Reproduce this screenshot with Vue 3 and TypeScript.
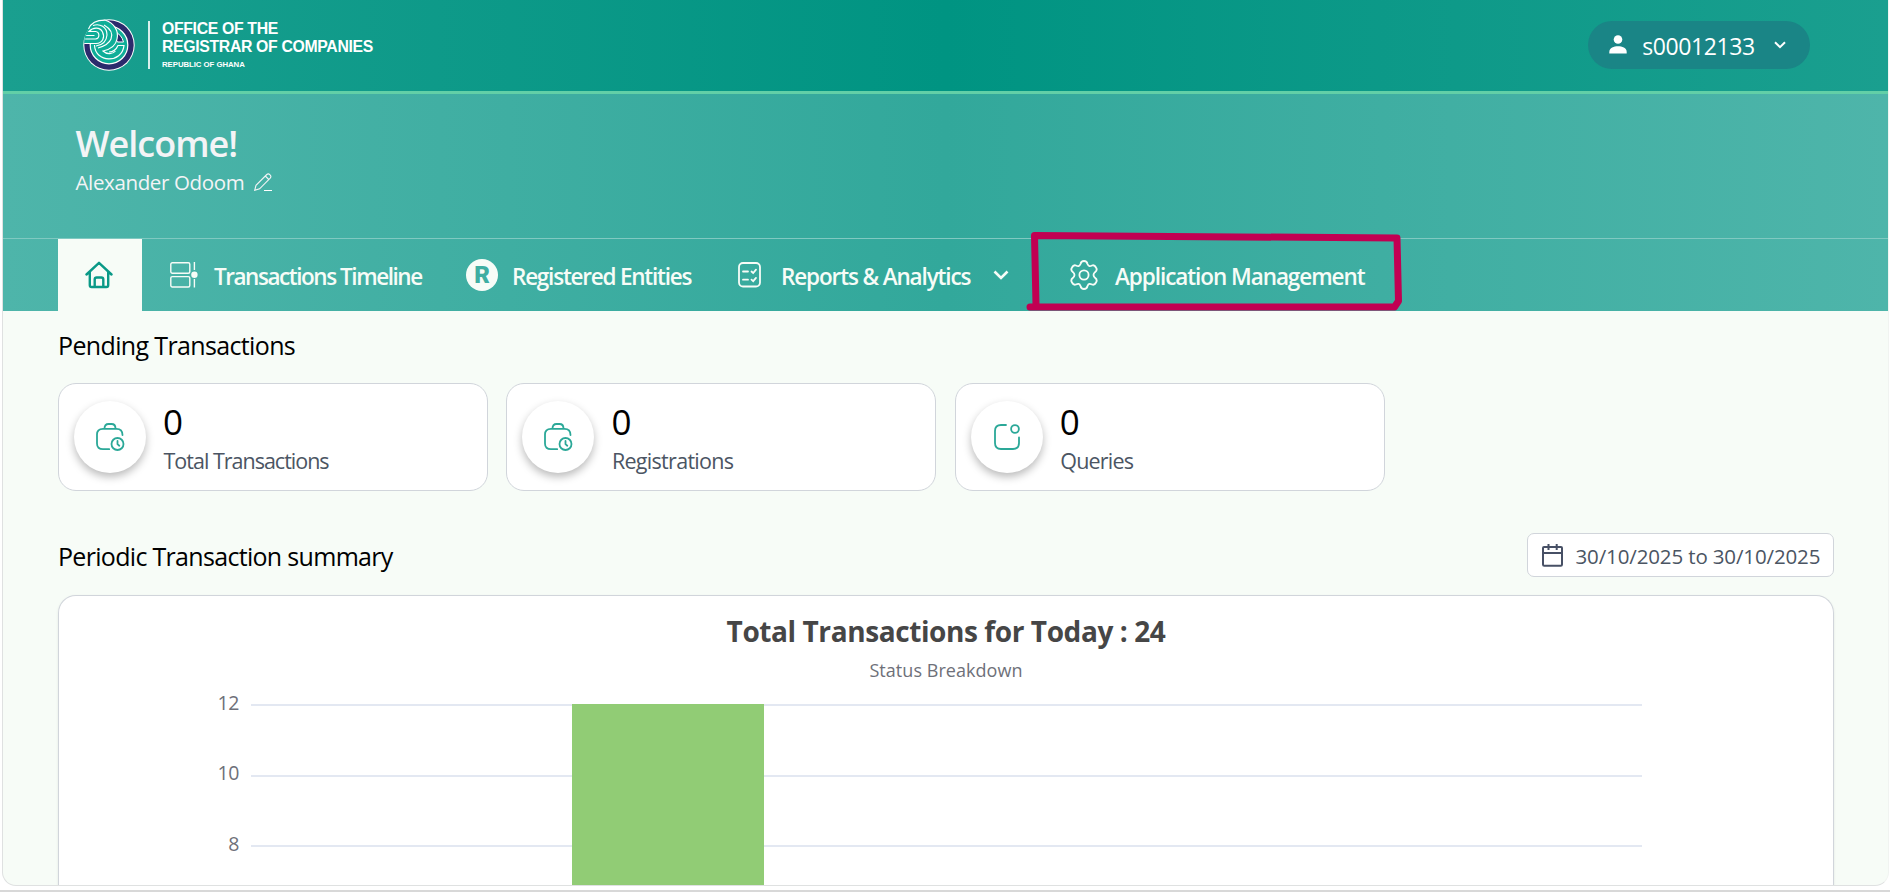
<script setup lang="ts">
interface Stat {
  label: string
  value: number
  icon: 'bag' | 'notice'
  fit: string
}

const stats: Stat[] = [
  { label: 'Total Transactions', value: 0, icon: 'bag', fit: 'fit-total' },
  { label: 'Registrations', value: 0, icon: 'bag', fit: 'fit-reg' },
  { label: 'Queries', value: 0, icon: 'notice', fit: 'fit-query' },
]

const axisTicks: number[] = [12, 10, 8]
</script>

<template>
  <div class="page">
    <div class="window">
      <header class="topbar">
        <div class="brand">
          <svg class="emblem" viewBox="0 0 52 52">
            <circle cx="26" cy="26" r="25.700" fill="#fff" />
            <circle cx="26" cy="26" r="24.700" fill="#2b2a6c" />
            <circle cx="26" cy="26" r="18.800" fill="#0fae98" stroke="#fff" stroke-width="1.200" />
            <path d="M31 12.500Q38.500 15 40.500 23H34.500Q33 20 31 17.500z" fill="#2b2a6c" stroke="#fff" />
            <path d="M11.500 26C12 44 39 45 41 26.500H35C33 31 30 33 26 33" fill="none" stroke="#fff" stroke-width="1.200" />
            <path d="M1.300 24.500C1 19 2.500 14 5.500 10C8 4 14 1 22.500 1.200C31 4 36 12 34 20C33 26 29 30 24 33.500Q20 31 20 28Q14 29 11 24.500z" fill="#0fae98" />
            <path d="M1.300 24.500H13C20 24 22 18 19.500 13C17 8 10 8 6 12.500H12.500C17 13 17 19.500 12.500 20H2.200M3.200 16.500H11.500M5.500 10C8 4 14 1 22.500 1.200C31 4 36 12 34 20C33 26 29 30 20 32C24 36 30 35 32.500 32M10 6.500C17 4 24 8 24 16C23.500 22 20 26 13 27M21 6C28 10 30 15 28 20C26 25 22 27 15 29" fill="none" stroke="#fff" stroke-width="1.150" />
          </svg>
          <span class="brand-rule"></span>
          <div class="brand-text">
            <span class="brand-a">OFFICE OF THE</span>
            <span class="brand-b">REGISTRAR OF COMPANIES</span>
            <span class="brand-c">REPUBLIC OF GHANA</span>
          </div>
        </div>
        <button class="user">
          <svg class="user-icon" viewBox="0 0 18 19">
            <circle cx="9" cy="4.500" r="4.300" fill="#fff" />
            <path d="M0.300 18.500V17C0.300 12.800 5 11.300 9 11.300S17.700 12.800 17.700 17V18.500z" fill="#fff" />
          </svg>
          <span class="user-name">s00012133</span>
          <svg class="user-chevron" viewBox="0 0 12 8"><path d="M1 1.200L6 6.200L11 1.200" fill="none" stroke="#fff" stroke-width="2" /></svg>
        </button>
      </header>

      <section class="hero">
        <div class="greeting">
          <h1>Welcome!</h1>
          <p class="person">
            <span class="person-name">Alexander Odoom</span>
            <svg class="pencil" viewBox="0 0 18 18">
              <path d="M0.700 17.300L2 12.300L12.800 1.500C14.800 -0.300 18.200 2.900 16.200 5.100L5.600 15.800ZM11.300 3L14.800 6.500" fill="none" stroke="#f3f4f6" stroke-width="1.100" />
              <path d="M10 17.500H18" stroke="#fff" />
            </svg>
          </p>
        </div>
        <nav class="tabs">
          <a class="tab tab-home">
            <svg class="i-home" viewBox="0 0 28 28"><path d="M1.500 13.500L14 1.800L26.500 13.500M4.800 11V24.200Q4.800 26 6.600 26H21.400Q23.200 26 23.200 24.200V11M9.700 26V18.500Q9.700 16.500 11.700 16.500H16.300Q18.300 16.500 18.300 18.500V26" fill="none" stroke="#0a9987" stroke-width="2.400" stroke-linecap="round" stroke-linejoin="round" /></svg>
          </a>
          <a class="tab tab-timeline">
            <svg class="i-timeline" viewBox="0 0 28 26">
              <g fill="none" stroke="#f7fcf7" stroke-width="1.400">
                <rect x="0.800" y="0.800" width="19" height="10.400" rx="1.500" />
                <rect x="0.800" y="14.600" width="19" height="10.400" rx="1.500" />
                <path d="M24.400 0V8M24.400 17V25.500" />
              </g>
              <circle cx="24.400" cy="12.700" r="3.200" fill="#f7fcf7" />
            </svg>
            <span class="tab-label">Transactions Timeline</span>
          </a>
          <a class="tab tab-entities">
            <span class="i-reg">R</span>
            <span class="tab-label">Registered Entities</span>
          </a>
          <a class="tab tab-reports">
            <svg class="i-reports" viewBox="0 0 24 26">
              <g fill="none" stroke="#f7fcf7" stroke-width="1.800" stroke-linecap="round">
                <rect x="1" y="1" width="21" height="23.500" rx="4" />
                <path d="M5 9.500H10M5 17.700H10M13.500 9.500L15.200 11L18 7.700M13.500 17.700L15.200 19.200L18 15.900" />
              </g>
            </svg>
            <span class="tab-label">Reports &amp; Analytics</span>
            <svg class="i-chevron" viewBox="0 0 16 12"><path d="M1.500 2.500L8 9L14.500 2.500" fill="none" stroke="#f7fcf7" stroke-width="2.600" /></svg>
          </a>
          <a class="tab tab-app">
            <svg class="i-gear" viewBox="0 0 28 30">
              <g fill="none" stroke="#f7fcf7" stroke-width="1.800" stroke-linejoin="round">
                <path d="M10.500 4C11 1.500 12 1 14 1S17 1.500 17.500 4C18.500 6.500 20 6.500 22 5.500C24 4.800 25 5.500 26 7.500C27.500 9.800 27 10.800 25 12.200C23 14 23 16 25 17.800C27 19.200 27.500 20.200 26 22.500C25 24.500 24 25.200 22 24.500C20 23.500 18.500 23.500 17.500 26C17 28.500 16 29 14 29S11 28.500 10.500 26C9.500 23.500 8 23.500 6 24.500C4 25.200 3 24.500 2 22.500C0.500 20.200 1 19.200 3 17.800C5 16 5 14 3 12.200C1 10.800 0.500 9.800 2 7.500C3 5.500 4 4.800 6 5.500C8 6.500 9.500 6.500 10.500 4Z" />
                <circle cx="14" cy="15" r="4.600" />
              </g>
            </svg>
            <span class="tab-label">Application Management</span>
            <svg class="marker" viewBox="0 0 376 80">
              <path d="M10 74L8.500 4.500L371 7L372.500 70L368.500 76L4 76" fill="none" stroke="#c10052" stroke-width="7" stroke-linecap="round" stroke-linejoin="round" />
            </svg>
          </a>
        </nav>
      </section>

      <main class="content">
        <h2 class="pending">Pending Transactions</h2>
        <div class="stats">
          <article v-for="stat in stats" :key="stat.label" class="stat">
            <span class="stat-badge">
              <svg v-if="stat.icon === 'bag'" class="i-stat" viewBox="0 0 30 30">
                <g fill="none" stroke="#2ba898" stroke-width="1.800" stroke-linecap="round">
                  <path d="M14.200 27.200H8Q2 27.200 2 21.500V12.500Q2 6.800 8 6.800H21.500Q27.500 6.800 27.500 13M9.500 6.500Q9.500 2 13.500 2H16.500Q20.500 2 20.500 6.500" />
                  <circle cx="22.500" cy="22" r="6" />
                  <path d="M22.500 19V22.200L24.300 23.700" />
                </g>
              </svg>
              <svg v-else class="i-stat" viewBox="0 0 30 30">
                <g fill="none" stroke="#2ba898" stroke-width="1.800" stroke-linecap="round">
                  <path d="M14 3H9Q3 3 3 9V21Q3 27 9 27H21Q27 27 27 21V15.500" />
                  <circle cx="23" cy="7" r="3.900" />
                </g>
              </svg>
            </span>
            <div class="stat-text">
              <span class="stat-value">{{ stat.value }}</span>
              <span class="stat-label" :class="stat.fit">{{ stat.label }}</span>
            </div>
          </article>
        </div>

        <div class="summary-head">
          <h2 class="summary">Periodic Transaction summary</h2>
          <button class="range">
            <svg class="i-cal" viewBox="0 0 21 23"><path d="M2 3H19Q20 3 20 4V20.500Q20 21.700 18.800 21.700H2.200Q1 21.700 1 20.500V4Q1 3 2 3ZM1 9H20M6.500 0V6M14.700 0V6" fill="none" stroke="#475065" stroke-width="2" /></svg>
            <span class="range-text">30/10/2025 to 30/10/2025</span>
          </button>
        </div>

        <section class="chart">
          <h3>Total Transactions for Today : 24</h3>
          <p class="chart-sub">Status Breakdown</p>
          <div class="plot">
            <div v-for="tick in axisTicks" :key="tick" class="row">
              <span class="tick">{{ tick }}</span>
              <span class="grid-line"></span>
            </div>
            <div class="bar"></div>
          </div>
        </section>
      </main>
    </div>
    <div class="footer-edge"></div>
  </div>
</template>

<style>
html, body { margin: 0; height: 100%; overflow: hidden; background: #fff; }
</style>

<style scoped>
.page {
  width: 1890px; height: 892px; overflow: hidden; display: flex; flex-direction: column;
  justify-content: space-between; background: #fff; box-sizing: border-box;
  font-family: "Open Sans", "Noto Sans", sans-serif;
}
.page * { box-sizing: border-box; }
h1, h2, h3, p { margin: 0; font-weight: 400; }
span { white-space: nowrap; }
svg { display: block; flex: none; }
.window {
  margin-left: 2px; width: 1887px; height: 886px; overflow: hidden; border: 1px solid #dfe1e1;
  border-top: 0; border-right-color: #f1f4f1; border-radius: 0 0 14px 14px; background: #f7fcf7;
}
.topbar {
  height: 94px; border-bottom: 3px solid #62cfa7; display: flex; justify-content: space-between;
  padding: 0 78px 0 80px; background: linear-gradient(90deg, #1a9f8f, #009482 50%, #1a9f8f);
}
.brand { display: flex; padding-top: 19px; }
.emblem { width: 52px; height: 52px; }
.brand-rule { width: 2px; height: 48px; margin: 2px 12px 0 13px; background: #d9f0ec; }
.brand-text {
  display: flex; flex-direction: column; color: #fff; font-weight: 700;
  font-family: "Liberation Sans", Arial, sans-serif;
}
.brand-a, .brand-b { font-size: 15.800px; line-height: 17.500px; letter-spacing: -.33px; }
.brand-a { padding-top: 1px; }
.brand-c { font-size: 7.800px; line-height: 10px; margin-top: 5px; letter-spacing: -.05px; }
.user {
  width: 222px; height: 48px; margin-top: 21px; border: 0; border-radius: 24px; background: #1a8586;
  display: flex; align-items: center; padding: 0 24px 0 21px; color: #fff; font: inherit;
}
.user-icon { width: 18px; height: 19px; margin-top: -1px; }
.user-name { font-size: 23px; margin-left: 15px; width: 113px; line-height: 48px; padding-top: 1px; letter-spacing: -.4px; }
.user-chevron { width: 12px; height: 8px; margin-left: 19px; }
.hero { height: 217px; background: linear-gradient(90deg, #4eb5aa, #32a89b 50%, #4eb5aa); }
.greeting { height: 144px; padding: 25px 0 0 72.500px; color: #f3f4f6; }
h1 { font-size: 36px; line-height: 50px; font-weight: 650; letter-spacing: -1px; }
.person { display: flex; align-items: center; height: 26px; }
.person-name { font-size: 20.500px; line-height: 26px; width: 169px; letter-spacing: -.36px; }
.pencil { width: 18px; height: 18px; margin-left: 9.500px; }
.tabs {
  display: flex; height: 73px; border-top: 1px solid #80c9c1; padding-left: 55px; color: #f7fcf7;
}
.tab { display: flex; align-items: center; height: 72px; position: relative; }
.tab-label { font-size: 22.500px; font-weight: 600; line-height: 30px; padding-top: 3px; margin-bottom: -1px; }
.tab-home { width: 84px; justify-content: center; background: #f7fcf7; padding-right: 2px; }
.i-home { width: 28px; height: 28px; }
.tab-timeline { width: 324px; padding-left: 28px; letter-spacing: -1.450px; }
.i-timeline { width: 28px; height: 26px; margin-right: 16px; }
.tab-entities { width: 270px; letter-spacing: -1.230px; }
.i-reg {
  width: 32px; height: 32px; border-radius: 50%; background: #f7fcf7; color: #3eaea2; margin-right: 14px;
  font: 900 24px/32px Roboto, sans-serif; text-align: center; letter-spacing: 0;
}
.tab-reports { width: 334px; padding-left: 2px; letter-spacing: -1.130px; }
.i-reports { width: 24px; height: 26px; margin-right: 19px; }
.i-chevron { width: 16px; height: 12px; position: absolute; left: 257px; }
.tab-app { width: 330px; letter-spacing: -1.060px; }
.i-gear { width: 28px; height: 30px; margin-right: 17px; }
.marker { position: absolute; left: -44px; top: -8px; width: 376px; height: 80px; overflow: visible; }
.content { padding: 16px 54px 0 55px; color: #000; }
.pending, .summary { font-size: 25px; line-height: 36px; letter-spacing: -.64px; }
.summary { letter-spacing: -.69px; }
.stats { display: flex; gap: 18.400px; margin-top: 20px; }
.stat {
  width: 430px; height: 108px; border: 1px solid #d1d5db; border-radius: 18px; background: #fff;
  display: flex; padding: 17px 15px;
}
.stat-badge {
  width: 72px; height: 72px; border-radius: 50%; background: #fff; display: flex;
  align-items: center; justify-content: center; box-shadow: 0 4px 9px rgba(0, 0, 0, .27);
}
.i-stat { width: 30px; height: 30px; }
.stat-text { display: flex; flex-direction: column; margin-left: 17.500px; }
.stat-value { font-size: 35px; line-height: 42px; margin-left: -.5px; }
.stat-label { font-size: 21.500px; line-height: 30px; color: #4b5563; margin-top: 3px; }
.fit-total { letter-spacing: -1px; }
.fit-reg { letter-spacing: -.7px; }
.fit-query { letter-spacing: -.8px; }
.summary-head { display: flex; justify-content: space-between; height: 44px; margin-top: 42px; }
.summary { padding-top: 5px; }
.range {
  width: 307px; height: 44px; border: 1px solid #d1d5db; border-radius: 7px; background: #fff; padding: 0 0 0 14px;
  display: flex; align-items: center; font: inherit; color: #4b5563;
}
.i-cal { width: 21px; height: 23px; }
.range-text { font-size: 20.500px; margin-left: 12.500px; letter-spacing: -.13px; padding-top: 1px; }
.chart {
  height: 320px; margin-top: 18px; border: 1px solid #d1d5db; border-radius: 18px 18px 0 0;
  border-bottom: 0; background: #fff; text-align: center; box-shadow: 0 1px 3px rgba(0, 0, 0, .08);
}
h3 { padding-top: 16px; font-size: 28px; line-height: 38px; font-weight: 700; color: #464646; letter-spacing: -.41px; }
.chart-sub { font-size: 18px; line-height: 24px; margin-top: 8px; color: #6e7079; letter-spacing: .05px; }
.plot { position: relative; padding-left: 140px; }
.row { display: flex; align-items: center; height: 70.500px; }
.row:first-child { margin-top: -12px; }
.tick { width: 40px; text-align: right; font-size: 19.500px; letter-spacing: -.4px; line-height: 28px; margin: -5px 12px 0 0; color: #6e7079; }
.grid-line { width: 1391px; height: 2px; background: #e3e8f2; }
.bar { position: absolute; left: 513px; top: 34px; width: 192px; height: 220px; background: #91cc75; }
.footer-edge { height: 2px; background: #d8d8d8; }
</style>
